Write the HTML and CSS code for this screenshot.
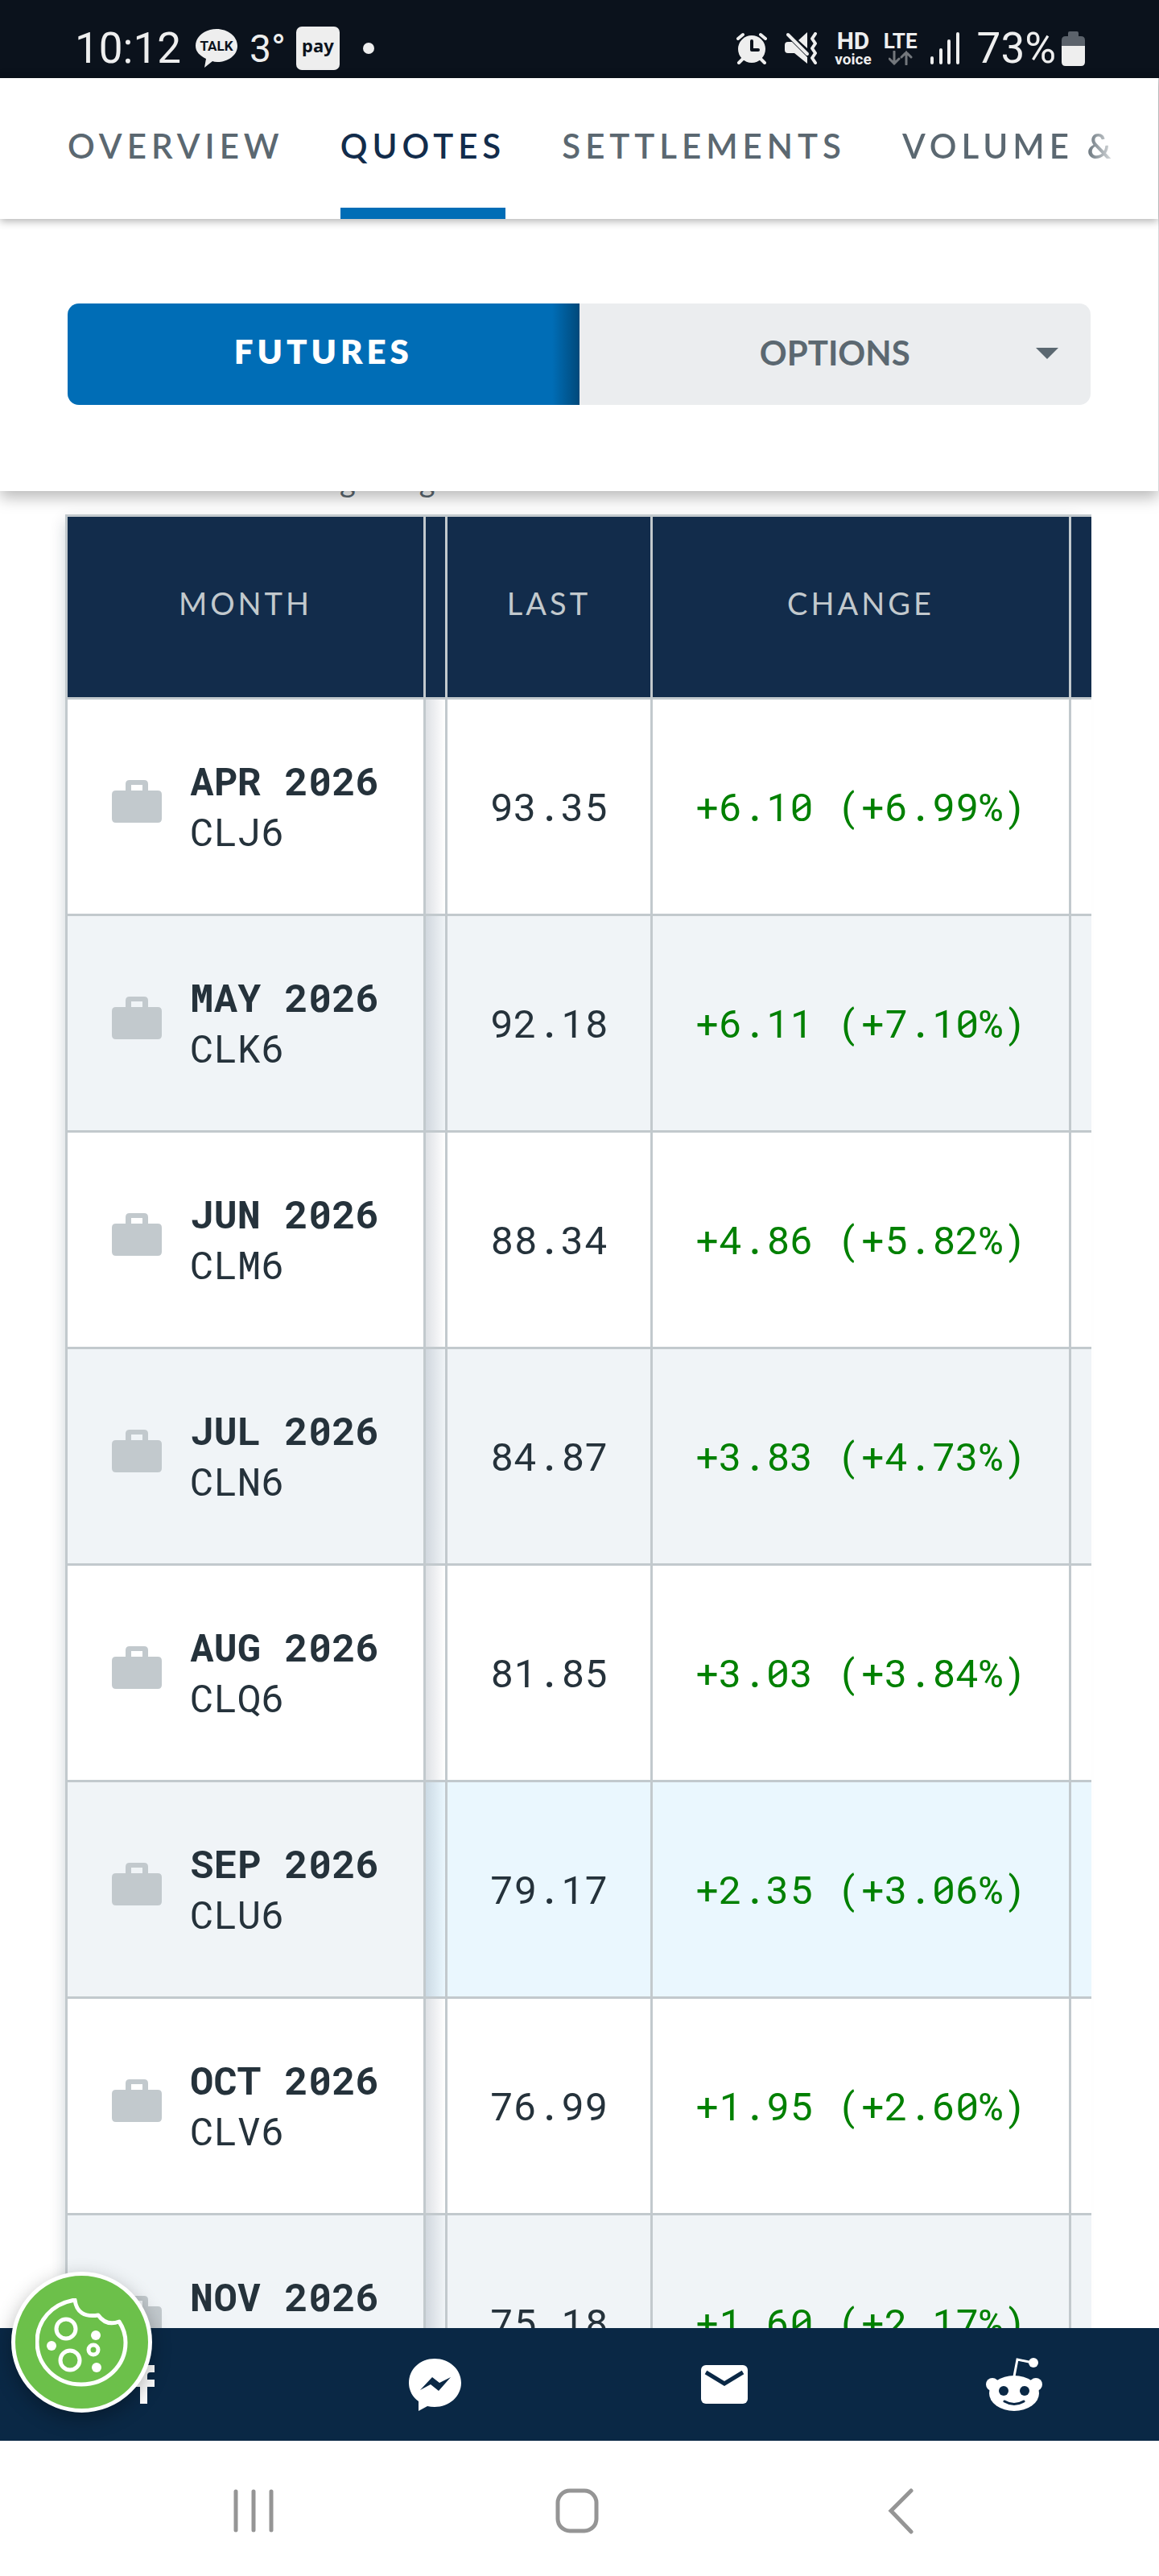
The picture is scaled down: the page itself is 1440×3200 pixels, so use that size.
FILE: index.html
```html
<!DOCTYPE html>
<html lang="en">
<head>
<meta charset="utf-8">
<meta name="viewport" content="width=device-width, initial-scale=1">
<title>Futures Quotes</title>
<link rel="stylesheet" href="styles.css">
</head>
<body>
<svg class="defs" aria-hidden="true">
  <symbol id="case" viewBox="0 0 62 53"><path d="M22 0h18q5 0 5 5v8h12q5 0 5 5v30q0 5-5 5H5q-5 0-5-5V18q0-5 5-5h12V5q0-5 5-5zm2 6v7h14V6z" fill="#c2c9cd" fill-rule="evenodd"/></symbol>
</svg>

<div class="status">
  <div class="status-left">
    <span class="clock">10:12</span>
    <span class="talk">
      <svg viewBox="0 0 52 48" aria-hidden="true"><path d="M26 0c14 0 26 9 26 21S40 41 27 41q-4 0-6-1l-10 8 2-11C5 33 0 28 0 21 0 9 12 0 26 0z" fill="#eee"/></svg>
      <span class="talk-text">TALK</span>
    </span>
    <span class="temp">3°</span>
    <span class="pay">pay</span>
    <span class="dot"></span>
  </div>
  <div class="status-right">
    <svg class="alarm" viewBox="0 0 40 40" aria-hidden="true"><circle cx="20" cy="21" r="17" fill="#eee"/><path d="M3 8l6-5M37 8l-6-5M9 33l-5 5M31 33l5 5" stroke="#eee" stroke-width="4" stroke-linecap="round"/><path d="M20 11v11h8" fill="none" stroke="#0b121c" stroke-width="4" stroke-linecap="round" stroke-linejoin="round"/></svg>
    <svg class="mute" viewBox="0 0 42 40" aria-hidden="true"><path d="M17 10L28 0v20zM4 12h5l19 19v8L12 26H4q-4 0-4-4v-6q0-4 4-4z" fill="#eee"/><path d="M4 3l24 24" stroke="#eee" stroke-width="4" stroke-linecap="round"/><path d="M38 2l-4 6 4 6-4 6 4 6-4 6 4 6" fill="none" stroke="#eee" stroke-width="4" stroke-linecap="round" stroke-linejoin="round"/></svg>
    <span class="hd"><b>HD</b><small>voice</small></span>
    <span class="lte"><b>LTE</b>
      <svg viewBox="0 0 30 18" aria-hidden="true"><path d="M7 1v15M1 10l6 6 6-6M22 17V2M16 8l6-6 6 6" fill="none" stroke="#73777c" stroke-width="3" stroke-linecap="round"/></svg>
    </span>
    <svg class="signal" viewBox="0 0 37 40" aria-hidden="true"><path d="M2 32v6M13 22v16M23 11v27M34 2v36" stroke="#eee" stroke-width="4" stroke-linecap="round"/></svg>
    <span class="level">73%</span>
    <svg class="battery" viewBox="0 0 29 43" aria-hidden="true"><path d="M10 0h9q2 0 2 2v4h3q5 0 5 5v7H0v-7q0-5 5-5h3V2q0-2 2-2z" fill="#5b626b"/><path d="M0 18h29v20q0 5-5 5H5q-5 0-5-5z" fill="#eee"/></svg>
  </div>
</div>

<header class="header">
  <nav class="tabs">
    <a class="tab" href="#overview">OVERVIEW</a>
    <a class="tab tab-active" href="#quotes" aria-current="page">QUOTES</a>
    <a class="tab" href="#settlements">SETTLEMENTS</a>
    <a class="tab" href="#volume">VOLUME &amp;</a>
  </nav>
  <div class="switch">
    <button class="switch-futures" type="button">FUTURES</button>
    <button class="switch-options" type="button">OPTIONS<svg class="caret" viewBox="0 0 28 14" aria-hidden="true"><path d="M0 0h28L14 14z" fill="#5b6871"/></svg></button>
  </div>
</header>

<main class="content">
  <p class="note"><span>g</span><span>g</span></p>
  <table class="quotes">
    <colgroup><col class="col-month"><col class="col-gap"><col class="col-last"><col class="col-change"><col></colgroup>
    <thead>
      <tr><th>MONTH</th><th></th><th>LAST</th><th>CHANGE</th><th></th></tr>
    </thead>
    <tbody>
      <tr><td><div class="month"><svg class="case"><use href="#case"/></svg><div><b>APR 2026</b><span>CLJ6</span></div></div></td><td></td><td>93.35</td><td class="up">+6.10 (+6.99%)</td><td></td></tr>
      <tr><td><div class="month"><svg class="case"><use href="#case"/></svg><div><b>MAY 2026</b><span>CLK6</span></div></div></td><td></td><td>92.18</td><td class="up">+6.11 (+7.10%)</td><td></td></tr>
      <tr><td><div class="month"><svg class="case"><use href="#case"/></svg><div><b>JUN 2026</b><span>CLM6</span></div></div></td><td></td><td>88.34</td><td class="up">+4.86 (+5.82%)</td><td></td></tr>
      <tr><td><div class="month"><svg class="case"><use href="#case"/></svg><div><b>JUL 2026</b><span>CLN6</span></div></div></td><td></td><td>84.87</td><td class="up">+3.83 (+4.73%)</td><td></td></tr>
      <tr><td><div class="month"><svg class="case"><use href="#case"/></svg><div><b>AUG 2026</b><span>CLQ6</span></div></div></td><td></td><td>81.85</td><td class="up">+3.03 (+3.84%)</td><td></td></tr>
      <tr class="updated"><td><div class="month"><svg class="case"><use href="#case"/></svg><div><b>SEP 2026</b><span>CLU6</span></div></div></td><td></td><td>79.17</td><td class="up">+2.35 (+3.06%)</td><td></td></tr>
      <tr><td><div class="month"><svg class="case"><use href="#case"/></svg><div><b>OCT 2026</b><span>CLV6</span></div></div></td><td></td><td>76.99</td><td class="up">+1.95 (+2.60%)</td><td></td></tr>
      <tr><td><div class="month"><svg class="case"><use href="#case"/></svg><div><b>NOV 2026</b></div></div></td><td></td><td>75.18</td><td class="up">+1.60 (+2.17%)</td><td></td></tr>
    </tbody>
  </table>
</main>

<footer class="share">
  <a href="#facebook" aria-label="Facebook"><svg width="24" height="48" viewBox="0 0 24 48"><path d="M6 48V27H0v-9h6v-6C6 4 10 0 17 0h7v9h-5q-4 0-4 4v5h9v9h-9v21z" fill="#fff"/></svg></a>
  <a href="#messenger" aria-label="Messenger"><svg width="65" height="65" viewBox="0 0 65 65"><path d="M32 0c18 0 33 13 33 30S50 60 32 60q-5 0-9-1l-11 6V53C5 48 0 40 0 30 0 13 14 0 32 0z" fill="#fff"/><path d="M14 39l15-16 9 7 14-7-15 17-10-8z" fill="#0a2845"/></svg></a>
  <a href="#mail" aria-label="Email"><svg width="58" height="48" viewBox="0 0 58 48"><rect width="58" height="48" rx="6" fill="#fff"/><path d="M6 9l23 14L52 9" fill="none" stroke="#0a2845" stroke-width="5"/></svg></a>
  <a href="#reddit" aria-label="Reddit"><svg width="70" height="66" viewBox="0 0 70 66"><path d="M35 23l4-21 19 4" fill="none" stroke="#fff" stroke-width="3"/><circle cx="59" cy="6" r="6" fill="#fff"/><circle cx="8" cy="33" r="8" fill="#fff"/><circle cx="62" cy="33" r="8" fill="#fff"/><ellipse cx="35" cy="44" rx="31" ry="22" fill="#fff"/><circle cx="22" cy="41" r="6" fill="#0a2845"/><circle cx="48" cy="41" r="6" fill="#0a2845"/><path d="M23 54q12 7 24 0" fill="none" stroke="#0a2845" stroke-width="3" stroke-linecap="round"/></svg></a>
</footer>

<nav class="system" aria-label="System">
  <button type="button" aria-label="Recent apps"><svg width="50" height="54" viewBox="0 0 50 54"><path d="M3 3v48M25 3v48M47 3v48" stroke="#959595" stroke-width="5" stroke-linecap="round"/></svg></button>
  <button type="button" aria-label="Home"><svg width="54" height="56" viewBox="0 0 54 56"><rect x="3" y="3" width="48" height="50" rx="15" fill="none" stroke="#959595" stroke-width="5"/></svg></button>
  <button type="button" aria-label="Back"><svg width="32" height="57" viewBox="0 0 32 57"><path d="M29 3L4 28 29 54" fill="none" stroke="#959595" stroke-width="5" stroke-linecap="round"/></svg></button>
</nav>

<button class="cookie" type="button" aria-label="Cookie settings">
  <svg viewBox="0 0 115 110" aria-hidden="true"><g fill="none" stroke="#fff" stroke-width="5"><path d="M49 2C20 7 2 28 2 54c0 30 24 53 55 53s55-23 55-52q0-14-8-26-16 6-26-8-26 4-29-19z" stroke-linejoin="round"/><circle cx="38" cy="38" r="12"/><circle cx="43" cy="77" r="12"/><circle cx="72" cy="64" r="6"/></g><g fill="#fff"><circle cx="75" cy="46" r="6"/><circle cx="20" cy="59" r="6"/><circle cx="76" cy="86" r="6"/></g></svg>
</button>
</body>
</html>
```
FILE: styles.css
```css
* { box-sizing: border-box; }
body {
  margin: 0;
  height: 100vh;
  display: flex;
  flex-direction: column;
  background: #fff;
  font-family: Lato, sans-serif;
  overflow: hidden;
}
button { border: 0; padding: 0; background: none; font-family: inherit; }
a { text-decoration: none; }
svg { display: block; flex: none; }
.defs { position: absolute; width: 0; height: 0; }

/* status bar */
.status {
  flex: none;
  height: 97px;
  padding: 24px 92px 0 93px;
  background: #0b121c;
  color: #eee;
  font-family: Roboto, sans-serif;
  display: flex;
  justify-content: space-between;
}
.status-left, .status-right { display: flex; align-items: center; height: 72px; }
.clock, .level { font-size: 53px; line-height: 72px; }
.clock { margin-right: 18px; }
.talk { position: relative; width: 52px; height: 48px; }
.talk-text {
  position: absolute;
  inset: 0;
  font: bold 17px/42px Roboto, sans-serif;
  color: #0b121c;
  text-align: center;
}
.temp { font-size: 48px; margin: 0 13px 0 15px; }
.pay {
  width: 54px;
  height: 54px;
  border-radius: 7px;
  background: #eee;
  color: #0b121c;
  font: bold 22px/46px "Noto Sans", sans-serif;
  text-align: center;
}
.dot { width: 14px; height: 14px; border-radius: 50%; background: #eee; margin-left: 29px; }
.alarm { width: 40px; height: 40px; margin-right: 21px; }
.mute { width: 42px; height: 40px; margin-right: 20px; }
.hd, .lte { display: flex; flex-direction: column; align-items: center; }
.hd { margin-right: 15px; }
.hd b { font-size: 30px; line-height: 26px; }
.hd small { font-size: 19px; font-weight: 700; line-height: 19px; }
.lte { margin-right: 16px; }
.lte b { font-size: 26px; line-height: 24px; }
.lte svg { width: 30px; height: 18px; }
.signal { width: 37px; height: 40px; margin-right: 21px; }
.level { margin-right: 7px; }
.battery { width: 29px; height: 43px; }

/* sticky header */
.header {
  flex: none;
  position: relative;
  z-index: 2;
  background: #fff;
  border-right: 1px solid #d5d8da;
  box-shadow: 0 8px 18px rgba(0, 0, 0, .28);
}
.tabs {
  height: 175px;
  padding: 0 64px 0 84px;
  display: flex;
  gap: 70px;
  box-shadow: 0 3px 10px rgba(0, 0, 0, .3);
}
.tab {
  flex: none;
  height: 175px;
  border-bottom: 14px solid transparent;
  font-size: 42px;
  font-weight: 600;
  line-height: 168px;
  letter-spacing: 6px;
  color: #5b6871;
}
.tab-active { color: #122c4b; border-color: #006db6; }
.tab:last-child {
  color: transparent;
  background: linear-gradient(90deg, #5b6871 85%, #fff 102%);
  background-clip: text;
}
.switch { display: flex; padding: 105px 84px 107px; }
.switch button { flex: 1; height: 126px; font-size: 42px; font-weight: 700; }
.switch .switch-futures {
  padding-bottom: 8px;
  border-radius: 14px 0 0 14px;
  background: linear-gradient(270deg, #00497a, #006db6 34px);
  color: #fff;
  font-weight: 800;
  letter-spacing: 5px;
}
.switch .switch-options {
  position: relative;
  padding-bottom: 4px;
  border-radius: 0 14px 14px 0;
  background: #ebedef;
  color: #5b6871;
}
.caret { position: absolute; right: 40px; top: 55px; width: 28px; height: 14px; }

/* quotes table */
.content { flex: 1; min-height: 0; overflow: hidden; padding: 0 84px 0 81px; }
.note {
  margin: -32px 0 0 341px;
  height: 61px;
  display: flex;
  gap: 79px;
  font-size: 38px;
  line-height: 36px;
  color: #5b6871;
}
.quotes {
  width: 100%;
  table-layout: fixed;
  border-spacing: 0;
  box-shadow: -8px 0 18px -8px rgba(10, 40, 60, .2);
  font-family: "Roboto Mono", "DejaVu Sans Mono", monospace;
  font-size: 49px;
  line-height: 63px;
  color: #25323b;
}
.col-month { width: 448px; }
.col-gap { width: 27px; }
.col-last { width: 255px; }
.col-change { width: 520px; }
th, td {
  padding: 0;
  border: solid #c2c9cd;
  border-width: 0 3px 3px 0;
  text-align: center;
  white-space: nowrap;
}
th:first-child, td:first-child { border-left-width: 3px; }
th:last-child, td:last-child { border-right-width: 0; }
th {
  height: 230px;
  padding-bottom: 10px;
  border-top-width: 3px;
  background: #122c4b;
  color: #c2c9cd;
  font: 400 38px/48px Lato, sans-serif;
  letter-spacing: 4px;
}
td { height: 269px; padding-bottom: 2px; background-color: #fff; }
tr:nth-child(even) td { background-color: #f0f4f7; }
tr.updated td:not(:first-child) { background-color: #eaf7fe; }
td:nth-child(2) { background-image: linear-gradient(90deg, rgba(20, 40, 70, .14), rgba(20, 40, 70, 0)); }
.month { display: flex; align-items: center; gap: 35px; padding-left: 55px; height: 126px; text-align: left; }
.month > div { height: 126px; }
.month b, .month span { display: block; }
.case { width: 62px; height: 53px; margin-bottom: 12px; }
.up { color: #008000; }

/* share bar */
.share {
  flex: none;
  height: 140px;
  background: #0a2845;
  display: grid;
  grid-template-columns: repeat(4, 1fr);
}
.share a { display: flex; align-items: center; justify-content: center; }

/* phone navigation */
.system {
  flex: none;
  height: 168px;
  padding: 6px 120px 0 114px;
  display: grid;
  grid-template-columns: repeat(3, 1fr);
  align-items: center;
  justify-items: center;
}

/* floating cookie button */
.cookie {
  position: fixed;
  z-index: 3;
  left: 14px;
  bottom: 203px;
  width: 175px;
  height: 175px;
  border: 5px solid #fff;
  border-radius: 50%;
  background: #6cc04a;
  box-shadow: 0 8px 24px rgba(0, 0, 0, .3);
  display: flex;
  align-items: center;
  justify-content: center;
}
.cookie svg { width: 115px; height: 110px; }
```
